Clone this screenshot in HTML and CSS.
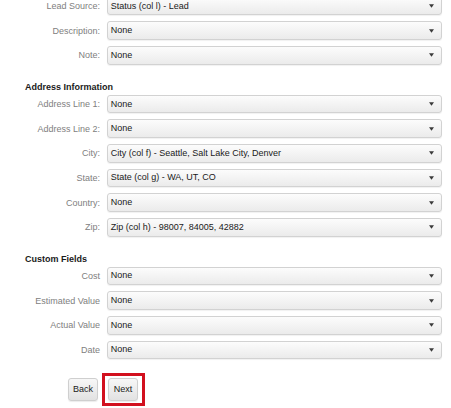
FILE: index.html
```html
<!DOCTYPE html>
<html>
<head>
<meta charset="utf-8">
<link rel="stylesheet" href="styles.css">
</head>
<body>
<div class="form">
  <div class="row"><label class="lbl">Lead Source:</label><div class="sel"><span>Status (col l) - Lead</span><svg class="arr" width="6" height="4" viewBox="0 0 6 4"><path d="M0 0H6L3 4Z"/></svg></div></div>
  <div class="row"><label class="lbl">Description:</label><div class="sel"><span>None</span><svg class="arr" width="6" height="4" viewBox="0 0 6 4"><path d="M0 0H6L3 4Z"/></svg></div></div>
  <div class="row"><label class="lbl">Note:</label><div class="sel"><span>None</span><svg class="arr" width="6" height="4" viewBox="0 0 6 4"><path d="M0 0H6L3 4Z"/></svg></div></div>

  <h3 class="section">Address Information</h3>
  <div class="row"><label class="lbl">Address Line 1:</label><div class="sel"><span>None</span><svg class="arr" width="6" height="4" viewBox="0 0 6 4"><path d="M0 0H6L3 4Z"/></svg></div></div>
  <div class="row"><label class="lbl">Address Line 2:</label><div class="sel"><span>None</span><svg class="arr" width="6" height="4" viewBox="0 0 6 4"><path d="M0 0H6L3 4Z"/></svg></div></div>
  <div class="row"><label class="lbl">City:</label><div class="sel"><span>City (col f) - Seattle, Salt Lake City, Denver</span><svg class="arr" width="6" height="4" viewBox="0 0 6 4"><path d="M0 0H6L3 4Z"/></svg></div></div>
  <div class="row"><label class="lbl">State:</label><div class="sel"><span>State (col g) - WA, UT, CO</span><svg class="arr" width="6" height="4" viewBox="0 0 6 4"><path d="M0 0H6L3 4Z"/></svg></div></div>
  <div class="row"><label class="lbl">Country:</label><div class="sel"><span>None</span><svg class="arr" width="6" height="4" viewBox="0 0 6 4"><path d="M0 0H6L3 4Z"/></svg></div></div>
  <div class="row"><label class="lbl">Zip:</label><div class="sel"><span>Zip (col h) - 98007, 84005, 42882</span><svg class="arr" width="6" height="4" viewBox="0 0 6 4"><path d="M0 0H6L3 4Z"/></svg></div></div>

  <h3 class="section">Custom Fields</h3>
  <div class="row"><label class="lbl">Cost</label><div class="sel"><span>None</span><svg class="arr" width="6" height="4" viewBox="0 0 6 4"><path d="M0 0H6L3 4Z"/></svg></div></div>
  <div class="row"><label class="lbl">Estimated Value</label><div class="sel"><span>None</span><svg class="arr" width="6" height="4" viewBox="0 0 6 4"><path d="M0 0H6L3 4Z"/></svg></div></div>
  <div class="row"><label class="lbl">Actual Value</label><div class="sel"><span>None</span><svg class="arr" width="6" height="4" viewBox="0 0 6 4"><path d="M0 0H6L3 4Z"/></svg></div></div>
  <div class="row"><label class="lbl">Date</label><div class="sel"><span>None</span><svg class="arr" width="6" height="4" viewBox="0 0 6 4"><path d="M0 0H6L3 4Z"/></svg></div></div>

  <div class="actions">
    <button class="btn">Back</button>
    <span class="highlight"><button class="btn">Next</button></span>
  </div>
</div>
</body>
</html>
```

FILE: styles.css
```css
html, body {
  margin: 0;
  padding: 0;
  background: #ffffff;
}

body {
  font-family: "Liberation Sans", Arial, Helvetica, sans-serif;
  font-size: 9px;
  color: #222222;
  overflow: hidden;
}

.form {
  width: 451px;
  box-sizing: border-box;
  padding: 0 9px 0 25px;
  margin-top: -3.3px;
}

.row {
  display: grid;
  grid-template-columns: 75px 1fr;
  column-gap: 6.7px;
  align-items: center;
  height: 18.67px;
  margin-bottom: 6px;
}

.lbl {
  text-align: right;
  color: #808080;
  font-size: 9px;
  line-height: 11px;
  padding-top: 1px;
}

.sel {
  height: 18.67px;
  box-sizing: border-box;
  display: flex;
  align-items: center;
  justify-content: space-between;
  padding: 0 7px 0 3px;
  border: 1px solid #d2d2d2;
  border-radius: 3px;
  background: linear-gradient(#fcfcfc, #ebebeb);
  box-shadow: 0 1px 1px rgba(0, 0, 0, 0.06);
  color: #1a1a1a;
  font-size: 9px;
  line-height: 11px;
}

.sel span {
  white-space: nowrap;
}

.arr {
  fill: #3a3a3a;
  flex: none;
  width: 5px;
  height: 4px;
}

.section {
  margin: 17px 0 2px 0;
  font-size: 9px;
  line-height: 11px;
  font-weight: bold;
  color: #1a1a1a;
}

.actions {
  display: flex;
  align-items: center;
  gap: 4px;
  padding-left: 43px;
  margin-top: 13.4px;
}

.btn {
  font-family: "Liberation Sans", Arial, Helvetica, sans-serif;
  font-size: 9px;
  color: #1a1a1a;
  height: 23px;
  width: 30px;
  padding: 0;
  border: 1px solid #cfcfcf;
  border-radius: 3px;
  background: linear-gradient(#f7f7f7, #e2e2e2);
  box-shadow: 0 1px 1px rgba(0, 0, 0, 0.08);
}

.highlight {
  display: inline-flex;
  border: 3px solid #d2101e;
  padding: 2px 4px 2px 3px;
}
```
